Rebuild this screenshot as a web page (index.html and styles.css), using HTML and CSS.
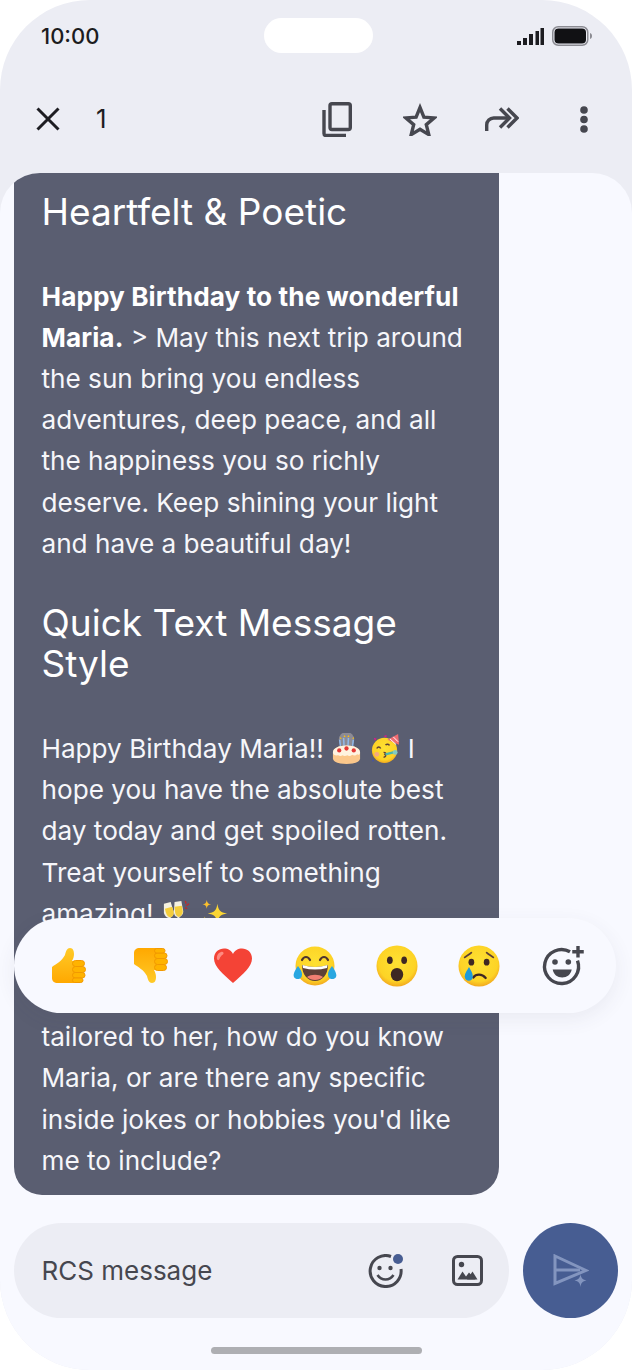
FILE: index.html
```html
<!DOCTYPE html>
<html lang="en">
<head>
<meta charset="utf-8">
<title>Messages</title>
<link rel="stylesheet" href="styles.css">
</head>
<body>
<svg class="defs" aria-hidden="true">
  <defs>
    <radialGradient id="face" cx="50%" cy="42%" r="58%">
      <stop offset="0" stop-color="#fee133"/>
      <stop offset=".78" stop-color="#fdd326"/>
      <stop offset="1" stop-color="#f2a91f"/>
    </radialGradient>
    <linearGradient id="thumb" x1="0" y1="0" x2="0" y2="1">
      <stop offset="0" stop-color="#ffca28"/>
      <stop offset="1" stop-color="#ffa800"/>
    </linearGradient>
    <symbol id="thumb-hand" viewBox="0 0 34 35">
      <path d="M0 19C4 16 10 13 13 7 14 3 15 0 18 0c3 0 4 3 4 6 0 3-1 5-2 7h4v22H6c-4 0-6-2-6-5z" fill="url(#thumb)"/>
      <g fill="#ffb300" stroke="#f29900" stroke-width="1">
        <rect x="20.500" y="12.500" width="12" height="6" rx="3"/>
        <rect x="20.500" y="18.500" width="13" height="6" rx="3"/>
        <rect x="20.500" y="24.500" width="12.500" height="5.500" rx="2.700"/>
        <rect x="20.500" y="30" width="10.500" height="4.500" rx="2.200"/>
      </g>
    </symbol>
  </defs>
</svg>
<main class="phone">
  <header class="top">
    <div class="status">
      <span class="clock">10:00</span>
      <span class="island"></span>
      <span class="status-icons">
        <svg class="signal" viewBox="0 0 27 17"><path d="M0 13h4v4H0zM6 10h4v7H6zM12 6h4v11h-4zM18.500 3h3.500v14h-3.500zM23.500 0h3.500v17h-3.500z" fill="#1c1c20"/></svg>
        <svg class="battery" viewBox="0 0 40 20"><rect x=".75" y=".75" width="35" height="18.500" rx="5.500" fill="none" stroke="#8b8b92" stroke-width="1.500"/><rect x="2.500" y="2.500" width="31.500" height="15" rx="4" fill="#111114"/><path d="M38 7c1.300.4 2 1.500 2 3s-.7 2.600-2 3z" fill="#8b8b92"/></svg>
      </span>
    </div>
    <div class="toolbar">
      <svg class="tool-close" viewBox="0 0 24 24"><path d="M1.500 1.500l21 21M22.500 1.500l-21 21" fill="none" stroke="#1d1d22" stroke-width="3"/></svg>
      <span class="count">1</span>
      <span class="tools">
        <svg class="tool-copy" viewBox="0 0 30 35"><path d="M2 8v23.500a2 2 0 0 0 2 2h20" fill="none" stroke="#46474f" stroke-width="3.400"/><rect x="8" y="1.700" width="20.300" height="25.800" rx="2" fill="none" stroke="#46474f" stroke-width="3.400"/></svg>
        <svg class="tool-star" viewBox="0 0 34 33"><path d="M17 4.500l3.900 9.600 10.300.8-7.900 6.700 2.500 10-8.800-5.400-8.800 5.400 2.500-10-7.900-6.700 10.300-.8z" fill="none" stroke="#46474f" stroke-width="3.400" stroke-linejoin="miter"/></svg>
        <svg class="tool-forward" viewBox="0 0 34 24"><path d="M1.700 24v-6a7 7 0 0 1 7-7h16" fill="none" stroke="#46474f" stroke-width="3.400"/><path d="M15 1.500l9.500 9.500-9.500 9.500M22.500 1.500L32 11l-9.500 9.500" fill="none" stroke="#46474f" stroke-width="3.400"/></svg>
        <svg class="tool-more" viewBox="0 0 8 27"><circle cx="4" cy="4" r="3.800" fill="#46474f"/><circle cx="4" cy="13.500" r="3.800" fill="#46474f"/><circle cx="4" cy="23" r="3.800" fill="#46474f"/></svg>
      </span>
    </div>
  </header>

  <section class="conversation">
    <div class="thread">
      <article class="bubble">
        <h2 class="bubble-title">Heartfelt &amp; Poetic</h2>
        <p class="bubble-text"><strong>Happy Birthday to the wonderful Maria.</strong> &gt; May this next trip around the sun bring you endless adventures, deep peace, and all the happiness you so richly deserve. Keep shining your light and have a beautiful day!</p>
        <h2 class="bubble-title">Quick Text Message Style</h2>
        <p class="bubble-text">Happy Birthday Maria!! <svg class="inline-emoji" viewBox="0 0 32 32"><circle cx="16" cy="7" r="8" fill="#c9c4c0" opacity=".45"/><path d="M9 7l1 9M13 5l.6 11M18 5l-.6 11M23 7l-1 9" stroke="#8fb7e8" stroke-width="1.600"/><path d="M9 6l1-2 1 2zM13 4l1-2 1 2zM17 4l1-2 1 2zM22 6l1-2 1 2z" fill="#ffc107"/><path d="M2 20c0-4 6-7 14-7s14 3 14 7v6c0 4-6 6-14 6S2 30 2 26z" fill="#fbc78b"/><path d="M2 20c0-4 6-7 14-7s14 3 14 7c0 2-1.500 3-3 2-1.500 1.500-3.500 1.500-5 .5-2 1.500-4 1.500-5 .5-2 1-4 1-5 0-1.500 1-3 1-4.500 0C4 23.500 2 22 2 20z" fill="#fff3e0"/><circle cx="8.500" cy="18" r="2.200" fill="#e53935"/><circle cx="16" cy="16" r="2.200" fill="#e53935"/><circle cx="23.500" cy="18" r="2.200" fill="#e53935"/></svg> <svg class="inline-emoji" viewBox="0 0 32 32"><circle cx="15" cy="18" r="13" fill="url(#face)"/><path d="M18 7L29 1l1 11z" fill="#ef6c72"/><path d="M20.500 6l6.500 6M24 4l5 5" stroke="#fff" stroke-width="1"/><path d="M7 16c1-2 3-2 4 0M16 12.500c1.500-1.500 3.500-1 4 .5" fill="none" stroke="#5d4037" stroke-width="1.500"/><path d="M14 20c2 0 3 1 1.500 2 1.500 1 .5 3-1.500 3" fill="none" stroke="#5d4037" stroke-width="1.500"/><path d="M16 22l8-2" stroke="#4db6ac" stroke-width="2.500"/><circle cx="26" cy="20" r="2.500" fill="#80cbc4"/><circle cx="7" cy="22" r="2.500" fill="#f5a97f"/><path d="M4 5l3 1-2 2zM14 3l3-1 0 3z" fill="#d81b8c"/><path d="M2 27l2 1-1 2z" fill="#3f51b5"/></svg> I hope you have the absolute best day today and get spoiled rotten. Treat yourself to something amazing! <svg class="inline-emoji" viewBox="0 0 32 32"><path d="M3 6l7-2 3 10c.6 3-1 5.500-3 6l2 8-2 .6-2-8c-2.500 0-4-2-5-5z" fill="#f4f1e0"/><path d="M4 11l7.500-2 1.500 5c.6 3-1 5.500-3 6-2.500 0-4-2-5-5z" fill="#f6cf3c"/><path d="M14 4l7-1 2 11c0 3-2 5-4 5.500l.6 8-2 .2-.8-8c-2.500-.5-3.500-3-3.500-5.500z" fill="#f4f1e0"/><path d="M14 9l7.500-1 1 6c0 3-2 5-4 5.500-2.500-.5-4-3-4-5.500z" fill="#f6cf3c"/><path d="M25 3l1 3M29 6l-3 2M27 11l-2-1" stroke="#c62828" stroke-width="1.300"/></svg> <svg class="inline-emoji" viewBox="0 0 32 32"><path d="M19 6c1 7 3 9 10 10-7 1-9 3-10 10-1-7-3-9-10-10 7-1 9-3 10-10z" fill="#fdd835"/><path d="M8 2c.4 3 1.600 4.200 4.500 4.500C9.600 6.900 8.400 8 8 11c-.4-3-1.600-4.100-4.500-4.500C6.400 6.200 7.600 5 8 2z" fill="#fbc02d"/><path d="M6 19c.3 2 1 3 3 3-2 .3-2.700 1-3 3-.3-2-1-2.700-3-3 2 0 2.700-1 3-3z" fill="#fdd835"/></svg></p>
        <p class="bubble-text">Would you like me to make it more tailored to her, how do you know Maria, or are there any specific inside jokes or hobbies you'd like me to include?</p>
      </article>
    </div>

    <div class="reactions">
      <svg class="reaction-thumb" viewBox="0 0 34 35"><use href="#thumb-hand"/></svg>
      <svg class="reaction-thumb" viewBox="0 0 34 35"><g transform="matrix(1 0 0 -1 0 35)"><use href="#thumb-hand"/></g></svg>
      <svg class="reaction" viewBox="0 0 40 40"><path d="M20 37C10 28 1 20.500 1 12.500 1 6 6 2.500 11 2.500c4 0 7.500 2 9 5.500 1.500-3.500 5-5.500 9-5.500 5 0 10 3.500 10 10C39 20.500 30 28 20 37z" fill="#f44336"/><path d="M8 6c-3 1-4.500 4-4 7 .3 1.500 2 1.500 2.500 0 .6-2 1.800-3.500 3.500-4.500C11.500 7 10 5.200 8 6z" fill="#ff8a80"/></svg>
      <svg class="reaction-face" viewBox="0 0 44 44"><circle cx="22" cy="22" r="19.500" fill="url(#face)"/><path d="M9 16c2-4 6-4 8 0M27 16c2-4 6-4 8 0" fill="none" stroke="#4e342e" stroke-width="2.200" stroke-linecap="round"/><path d="M9 21c8 2.500 18 2.500 26 0 0 10-6 16-13 16S9 31 9 21z" fill="#5d4037"/><path d="M9.500 21c8 2.500 17 2.500 25 0l-.5 3c-8 2-16 2-24 0z" fill="#fff"/><path d="M14 33c4-3 12-3 16 0-4 4-12 4-16 0z" fill="#ef7f72"/><path d="M5 22c3 4 5 7 3.500 11-1 2.500-6 3-7.500 0-1.500-3 2-8 4-11zM39 22c-3 4-5 7-3.500 11 1 2.500 6 3 7.500 0 1.500-3-2-8-4-11z" fill="#29a7e1"/></svg>
      <svg class="reaction-round" viewBox="0 0 44 44"><circle cx="22" cy="22" r="21.500" fill="url(#face)"/><ellipse cx="14.500" cy="16" rx="3" ry="4" fill="#3e2723"/><ellipse cx="29.500" cy="16" rx="3" ry="4" fill="#3e2723"/><ellipse cx="22" cy="31" rx="6.500" ry="7" fill="#3e2723"/></svg>
      <svg class="reaction-round" viewBox="0 0 44 44"><circle cx="22" cy="22" r="21.500" fill="url(#face)"/><path d="M7 13c2-1.500 5-3 7-5M37 13c-2-1.500-5-3-7-5" fill="none" stroke="#5d4037" stroke-width="1.800" stroke-linecap="round"/><ellipse cx="14" cy="18" rx="3" ry="3.600" fill="#3e2723"/><ellipse cx="30" cy="18" rx="3" ry="3.600" fill="#3e2723"/><path d="M16 34c3-4 9-4 13 .5" fill="none" stroke="#3e2723" stroke-width="2.400" stroke-linecap="round"/><path d="M11.500 23c2 3.500 4 6.500 4 10 0 6-8 6-8.500 0 0-3.500 3-7 4.500-10z" fill="#1e9ad8"/></svg>
      <svg class="reaction-add" viewBox="0 0 44 40"><path d="M31 5.800A17 17 0 1 0 38.500 14.700" fill="none" stroke="#46474f" stroke-width="3.400"/><circle cx="16" cy="16" r="2.800" fill="#46474f"/><circle cx="29.300" cy="16" r="2.800" fill="#46474f"/><path d="M13.700 23.500h19c-.8 5-4.800 8-9.500 8s-8.700-3-9.500-8z" fill="#46474f"/><path d="M39 0v11.500M33.250 5.750h11.500" stroke="#46474f" stroke-width="3.400"/></svg>
    </div>

    <div class="composer">
      <div class="field">
        <span class="placeholder">RCS message</span>
        <span class="field-icons">
          <span class="emoji-button">
            <svg class="field-smile" viewBox="0 0 35 34"><path d="M23 2.500A15.500 15.500 0 1 0 33 15" fill="none" stroke="#46474f" stroke-width="3"/><circle cx="11.500" cy="14" r="2.200" fill="#46474f"/><circle cx="22.500" cy="14" r="2.200" fill="#46474f"/><path d="M9.500 21c2 3 4.500 4.500 8 4.500s6-1.500 8-4.500" fill="none" stroke="#46474f" stroke-width="2.600"/></svg>
            <span class="new-dot"></span>
          </span>
          <svg class="field-image" viewBox="0 0 31 31"><rect x="1.500" y="1.500" width="28" height="28" rx="4" fill="none" stroke="#46474f" stroke-width="3"/><circle cx="9.500" cy="9.500" r="2.700" fill="#46474f"/><path d="M5.500 24.500l5-8 3.500 5 3-4 6.500 7z" fill="#46474f"/><path d="M15 24.500l5.500-8 5 8z" fill="#46474f"/></svg>
        </span>
      </div>
      <div class="send">
        <svg class="send-icon" viewBox="0 0 36 34"><path d="M2 2l31 14.500L2 29.500z" fill="none" stroke="#8395bf" stroke-width="3"/><path d="M3 16h24" stroke="#8395bf" stroke-width="3"/><path d="M27.500 20c.5 4 2 5.500 6 6.500-4 .7-5.500 2.300-6 6.500-.5-4.200-2-5.800-6-6.500 4-1 5.500-2.500 6-6.500z" fill="#8395bf"/></svg>
      </div>
    </div>
    <div class="home-area"><span class="home-bar"></span></div>
  </section>
</main>
</body>
</html>
```
FILE: styles.css
```css
* { box-sizing: border-box; }

html, body {
  margin: 0;
  height: 100%;
  background: #fff;
}

body {
  font-family: "Inter", "Roboto", "Liberation Sans", sans-serif;
  overflow: hidden;
}

.defs { position: absolute; width: 0; height: 0; }

.phone {
  width: 632px;
  height: 1370px;
  border-radius: 90px;
  overflow: hidden;
  background: #ecedf4;
  display: flex;
  flex-direction: column;
}

/* top chrome */
.top { flex: none; height: 173px; }

.status {
  height: 71px;
  padding: 18px 40px 0 41px;
  display: flex;
  justify-content: space-between;
  align-items: flex-start;
}

.clock {
  padding-top: 1px;
  font-size: 22px;
  line-height: 35px;
  font-weight: 500;
  color: #1c1c20;
  width: 190px;
}

.island {
  width: 109px;
  height: 35px;
  border-radius: 18px;
  background: #fff;
}

.status-icons {
  width: 186px;
  height: 35px;
  display: flex;
  justify-content: flex-end;
  align-items: center;
  gap: 8px;
}

.signal { width: 27px; height: 17px; margin-top: 1px; }
.battery { width: 40px; height: 20px; }

.toolbar {
  height: 96px;
  padding: 0 44px 0 36px;
  display: flex;
  align-items: center;
}

.tool-close { width: 24px; height: 24px; }

.count {
  margin: 0 0 2px 36px;
  font-size: 26px;
  color: #1d1d22;
}

.tools {
  margin-left: auto;
  display: flex;
  align-items: center;
}

.tool-copy { width: 30px; height: 35px; }
.tool-star { width: 34px; height: 33px; margin-left: 51px; }
.tool-forward { width: 34px; height: 24px; margin-left: 48px; }
.tool-more { width: 8px; height: 27px; margin-left: 61px; }

/* conversation panel */
.conversation {
  position: relative;
  flex: 1;
  min-height: 0;
  background: #f8f9ff;
  border-radius: 40px 40px 0 0;
  overflow: hidden;
  display: flex;
  flex-direction: column;
}

.thread {
  flex: 1;
  min-height: 0;
  overflow: hidden;
  padding: 0 14px;
  display: flex;
  flex-direction: column;
  justify-content: flex-end;
}

.bubble {
  flex: none;
  width: 485px;
  padding: 19px 28px 14px 27.500px;
  border-radius: 0 0 28px 28px;
  background: #5a5e71;
  color: #fff;
}

.bubble-title {
  margin: 0 0 44px;
  font-size: 37px;
  line-height: 41px;
  font-weight: 400;
}

.bubble-text {
  margin: 0;
  font-size: 26.150px;
  line-height: 41.200px;
  color: #f6f6fa;
}

.bubble-text + .bubble-title { margin-top: 38px; }
.bubble-text + .bubble-text { margin-top: 41px; }

.bubble-text strong {
  font-weight: 700;
  letter-spacing: .1px;
  color: #fff;
}

.inline-emoji {
  width: 31px;
  height: 31px;
  vertical-align: -6px;
}

/* reaction picker */
.reactions {
  position: absolute;
  left: 14px;
  top: 745px;
  width: 602px;
  height: 95px;
  border-radius: 48px;
  background: #f8f9ff;
  box-shadow: 0 6px 20px rgba(60, 64, 90, .08);
  display: grid;
  grid-template-columns: repeat(7, 82px);
  padding-left: 14px;
  align-items: center;
  justify-items: center;
}

.reaction-thumb { width: 34px; height: 35px; }
.reaction { width: 40px; height: 40px; }
.reaction-face { width: 44px; height: 44px; }
.reaction-round { width: 42px; height: 42px; }
.reaction-add { width: 44px; height: 40px; overflow: visible; }

/* message composer */
.composer {
  flex: none;
  margin-top: 28px;
  padding: 0 14px;
  display: flex;
  gap: 14px;
}

.field {
  width: 495px;
  height: 95px;
  border-radius: 48px;
  background: #ecedf4;
  padding: 0 26px 0 27.500px;
  display: flex;
  align-items: center;
  justify-content: space-between;
}

.placeholder {
  font-size: 26px;
  color: #46474f;
}

.field-icons {
  display: flex;
  align-items: center;
  gap: 49px;
}

.emoji-button { position: relative; display: block; width: 35px; height: 34px; }
.field-smile { display: block; width: 35px; height: 34px; }
.new-dot {
  position: absolute;
  right: 0;
  top: 0;
  width: 10px;
  height: 10px;
  border-radius: 50%;
  background: #475d92;
}

.field-image { width: 31px; height: 31px; }

.send {
  width: 95px;
  height: 95px;
  border-radius: 50%;
  background: #475d92;
  display: flex;
  align-items: center;
  justify-content: center;
}

.send-icon { width: 36px; height: 34px; }

.home-area {
  flex: none;
  height: 52px;
  display: flex;
  justify-content: center;
  padding-top: 29px;
}

.home-bar {
  width: 211px;
  height: 7px;
  border-radius: 4px;
  background: #aeafb3;
}
```
